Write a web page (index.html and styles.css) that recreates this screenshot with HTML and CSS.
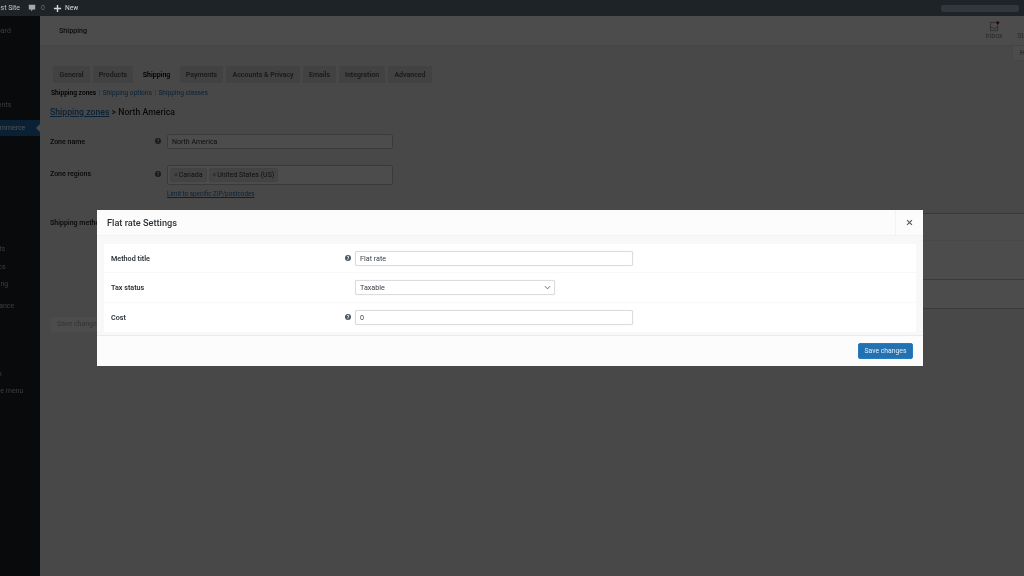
FILE: index.html
```html
<!DOCTYPE html>
<html lang="en">
<head>
<meta charset="utf-8">
<title>Shipping</title>
<link rel="stylesheet" href="styles.css">
</head>
<body>
<div class="page">
  <div class="adminbar">
    <span class="site">Test Site</span>
    <svg class="bar-icon" viewBox="0 0 10 10"><path d="M1 1h8v6H6L4 9.500V7H1z" fill="#a7aaad"/></svg>
    <span class="count">0</span>
    <svg class="bar-plus" viewBox="0 0 10 10"><path d="M4.200 1h1.600v3.200H9v1.600H5.800V9H4.200V5.800H1V4.200h3.200z" fill="#d5d7d9"/></svg>
    <span class="new">New</span>
    <span class="spacer"></span>
    <span class="account"></span>
  </div>
  <div class="shell">
    <nav class="sidebar">
      <ul class="menu">
        <li class="m-dash">Dashboard</li>
        <li class="m-gap">Posts</li>
        <li>Media</li>
        <li>Pages</li>
        <li class="m-comments">Comments</li>
        <li class="m-active">WooCommerce</li>
        <li class="m-products">Products</li>
        <li>Analytics</li>
        <li>Marketing</li>
        <li class="m-appearance">Appearance</li>
        <li>Plugins</li>
        <li class="m-tool">Toolbox</li>
        <li class="m-collapse">Collapse menu</li>
      </ul>
    </nav>
    <main class="main">
      <header class="topbar">
        <h1 class="page-title">Shipping</h1>
        <div class="activity">
          <div class="act-item">
            <svg class="inbox" viewBox="0 0 12 12"><path d="M1.500 1.500h8v9h-8zM1.500 7h2.400l.6 1.300h2.200l.6-1.300h2.200" fill="none" stroke="#8a8a8a" stroke-width=".9"/><circle cx="9.600" cy="1.800" r="1.700" fill="#b5232a"/></svg>
            <span>Inbox</span>
          </div>
          <div class="act-item"><span class="act-blank"></span><span>Stock</span></div>
        </div>
      </header>
      <div class="help-row"><span class="help-tab">Help</span></div>
      <div class="content">
        <div class="tabs">
          <span class="tab t-general">General</span>
          <span class="tab t-products">Products</span>
          <span class="tab tab-on t-shipping">Shipping</span>
          <span class="tab t-payments">Payments</span>
          <span class="tab t-accounts">Accounts &amp; Privacy</span>
          <span class="tab t-emails">Emails</span>
          <span class="tab t-integration">Integration</span>
          <span class="tab t-advanced">Advanced</span>
        </div>
        <div class="subnav">
          <b>Shipping zones</b><i>|</i><a>Shipping options</a><i>|</i><a>Shipping classes</a>
        </div>
        <h2 class="crumb"><a>Shipping zones</a> &gt; North America</h2>
        <div class="field f-name">
          <label>Zone name</label><span class="q">?</span>
          <div class="bg-input">North America</div>
        </div>
        <div class="field f-regions">
          <label>Zone regions</label><span class="q">?</span>
          <div class="bg-select">
            <span class="chip"><em>×</em>Canada</span>
            <span class="chip"><em>×</em>United States (US)</span>
          </div>
        </div>
        <a class="limit">Limit to specific ZIP/postcodes</a>
        <div class="methods">
          <label>Shipping methods</label>
          <div class="method-table">
            <div class="mt-head"></div>
            <div class="mt-body"></div>
            <div class="mt-foot"></div>
          </div>
        </div>
        <span class="bg-save">Save changes</span>
      </div>
    </main>
    <div class="overlay"></div>
    <section class="modal">
      <header class="modal-head">
        <h3>Flat rate Settings</h3>
        <span class="close"><svg viewBox="0 0 8 8"><path d="M1.200 1.200l5.600 5.600M6.800 1.200L1.200 6.800" stroke="#50575e" stroke-width="1.300"/></svg></span>
      </header>
      <div class="modal-body">
        <div class="form">
          <div class="row">
            <label>Method title</label><span class="help">?</span>
            <input class="ctl" type="text" value="Flat rate">
          </div>
          <div class="row">
            <label>Tax status</label><span class="help help-none"></span>
            <div class="ctl ctl-select">Taxable
              <svg viewBox="0 0 8 5"><path d="M1 1l3 3 3-3" fill="none" stroke="#50575e" stroke-width="1"/></svg>
            </div>
          </div>
          <div class="row">
            <label>Cost</label><span class="help">?</span>
            <input class="ctl" type="text" value="0">
          </div>
        </div>
      </div>
      <footer class="modal-foot"><button class="save" type="button">Save changes</button></footer>
    </section>
  </div>
</div>
</body>
</html>
```
FILE: styles.css
```css
* { box-sizing: border-box; }
html, body { margin: 0; padding: 0; height: 100%; overflow: hidden; background: #484848; }
body { font-family: Roboto, "Liberation Sans", sans-serif; font-size: 7px; color: #1d2327; }
.page { width: 1024px; height: 576px; display: flex; flex-direction: column; overflow: hidden; filter: blur(.5px); }
a { color: #2271b1; }

.adminbar { height: 16px; flex: none; background: #1d2327; color: #c3c4c7; display: flex; align-items: center; font-size: 7px; position: relative; z-index: 3; margin-left: -7px; }
.site { color: #c3c4c7; }
.bar-icon { width: 8px; height: 8px; margin-left: 8px; }
.count { margin-left: 5px; color: #6b7075; }
.bar-plus { width: 9px; height: 9px; margin-left: 8px; }
.new { margin-left: 3px; color: #d5d7d9; font-size: 6.700px; }
.spacer { flex: 1; }
.account { width: 78px; height: 7px; background: #30383d; margin-right: 5px; border-radius: 2px; }

.shell { flex: 1; display: flex; position: relative; min-height: 0; }
.sidebar { width: 40px; flex: none; background: #1d2327; overflow: hidden; }
.menu { list-style: none; margin: 0 0 0 -23px; padding: 7px 0 0; color: #c3c4c7; width: 63px; font-size: 7px; }
.menu li { height: 17.500px; line-height: 17.500px; white-space: nowrap; }
.menu .m-gap { margin-top: 3px; }
.menu .m-comments { margin-top: .5px; }
.menu .m-active { background: #2271b1; color: #fff; margin: 5.500px 0 0 0; height: 16.500px; line-height: 16.500px; position: relative; }
.m-active::after { content: ""; position: absolute; right: 0; top: 4px; border: 4.500px solid transparent; border-right-color: #f0f0f1; }
.menu .m-products { margin-top: 105px; }
.menu .m-appearance { margin-top: 4.500px; }
.menu .m-tool { margin-top: 32.500px; }

.main { flex: 1; min-width: 0; background: #f0f0f1; display: flex; flex-direction: column; }
.topbar { height: 30px; flex: none; background: #fff; display: flex; align-items: center; padding-left: 19px; border-bottom: 1px solid #e6e6e6; }
.page-title { margin: 0; font-size: 7.200px; font-weight: 500; flex: 1; }
.activity { display: flex; gap: 16px; margin-right: -10px; }
.act-item { display: flex; flex-direction: column; align-items: center; font-size: 7px; color: #8a8a8a; width: 16px; line-height: 8px; }
.act-blank { height: 11px; }
.inbox { width: 11px; height: 11px; }
.help-row { height: 14px; flex: none; display: flex; justify-content: flex-end; }
.help-tab { width: 11px; height: 14px; background: #fff; padding: 3px 0 0 7px; white-space: nowrap; overflow: hidden; font-size: 7px; color: #50575e; box-shadow: 0 0 1px #c3c4c7; }

.content { padding: 6px 0 0 10px; flex: 1; }
.tabs { display: flex; margin-left: 3px; height: 17px; }
.tab { height: 17px; background: #dcdcde; display: flex; align-items: center; justify-content: center; font-weight: 600; color: #50575e; margin-right: 3px; font-size: 7px; }
.tab-on { background: #f0f0f1; color: #000; }
.t-general { width: 37px; }
.t-products { width: 40px; }
.t-shipping { width: 41px; }
.t-payments { width: 43px; }
.t-accounts { width: 74px; }
.t-emails { width: 33px; }
.t-integration { width: 46px; }
.t-advanced { width: 44px; }

.subnav { margin: 6px 0 0 1px; height: 9px; line-height: 9px; font-size: 6.600px; display: flex; gap: 2.500px; }
.subnav b { font-weight: 600; color: #000; }
.subnav i { color: #787c82; font-style: normal; font-weight: 300; }
.crumb { margin: 9px 0 0; font-size: 8.700px; font-weight: 500; height: 11px; line-height: 11px; color: #1d2327; }
.crumb a { text-decoration: underline; }

.field { display: flex; }
.field label { width: 105px; font-weight: 600; font-size: 7px; }
.q { width: 6px; height: 6px; border-radius: 50%; background: #50575e; color: #fff; font-size: 5px; line-height: 6px; text-align: center; margin-right: 6px; font-weight: 700; flex: none; }
.f-name { margin-top: 16px; align-items: center; height: 15px; }
.f-name .q { position: relative; top: -.5px; }
.bg-input { width: 226px; height: 15px; background: #fff; border: 1px solid #c3c4c7; border-radius: 2px; padding-left: 4px; line-height: 14px; color: #2c3338; font-size: 7px; }
.f-regions { margin-top: 16px; height: 20px; }
.f-regions label { line-height: 19px; }
.f-regions .q { margin-top: 6px; }
.bg-select { width: 226px; height: 20px; background: #fff; border: 1px solid #c3c4c7; border-radius: 2px; padding: 2px; display: flex; gap: 2px; }
.chip { height: 14px; background: #e4e4e4; border: 1px solid #dcdcde; border-radius: 2px; padding: 0 3px; line-height: 12px; color: #2c3338; }
.chip em { font-style: normal; color: #787c82; margin-right: 1px; }
.limit { display: block; margin: 5px 0 0 117px; height: 9px; line-height: 9px; font-size: 6.300px; text-decoration: underline; }

.methods { display: flex; margin-top: 20px; }
.methods label { width: 117px; font-weight: 600; flex: none; white-space: nowrap; }
.method-table { flex: 1; border: 1px solid #c3c4c7; border-right: 0; background: #fff; height: 96px; margin-top: -6px; }
.mt-head { height: 27px; border-bottom: 1px solid #f0f0f0; }
.mt-body { height: 39px; border-bottom: 1px solid #c3c4c7; }
.mt-foot { height: 28px; background: #fff; }
.bg-save { display: block; width: 49px; height: 15px; margin: 8px 0 0 1px; background: #fff; border-radius: 2px; color: #b5b8b7; line-height: 15px; padding-left: 6px; white-space: nowrap; font-weight: 500; }

.overlay { position: absolute; inset: 0; background: rgba(0, 0, 0, .7); z-index: 1; }

.modal { position: absolute; left: 97px; top: 194px; width: 826px; height: 156px; z-index: 2; background: #fcfcfc; display: flex; flex-direction: column; }
.modal-head { height: 26px; flex: none; display: flex; align-items: center; justify-content: space-between; border-bottom: 1px solid #f2f2f2; padding-left: 10px; }
.modal-head h3 { margin: 0; font-size: 9.200px; font-weight: 500; color: #2c3338; }
.close { width: 28px; height: 26px; border-left: 1px solid #f2f2f2; display: flex; align-items: center; justify-content: center; }
.close svg { width: 7px; height: 7px; }
.modal-body { height: 100px; flex: none; background: #f8f8f8; padding: 8px 7px 3px; border-bottom: 1px solid #ebebeb; }
.form { background: #fff; height: 88px; display: flex; flex-direction: column; }
.row { height: 29.330px; display: flex; align-items: center; padding-left: 7px; border-bottom: 1px solid #f8f8f8; }
.row:last-child { border-bottom: 0; }
.row label { width: 234px; font-weight: 600; color: #2c3338; font-size: 7.200px; flex: none; }
.help { width: 6px; height: 6px; border-radius: 50%; background: #50575e; color: #fff; font-size: 5px; line-height: 6px; text-align: center; font-weight: 700; margin-right: 4px; flex: none; }
.help-none { visibility: hidden; }
.ctl { width: 278px; height: 15px; border: 1px solid #dcdcde; border-radius: 2px; background: #fff; padding: 0 4px; font: 7.200px Roboto, "Liberation Sans", sans-serif; color: #3c434a; box-shadow: 0 0 1px #d0d0d0; outline: 0; }
.ctl-select { width: 200px; display: flex; align-items: center; justify-content: space-between; padding-right: 3px; }
.ctl-select svg { width: 7px; height: 5px; }
.modal-foot { flex: 1; display: flex; align-items: center; justify-content: flex-end; padding-right: 10px; }
.save { width: 55px; height: 16px; background: #2271b1; border: 1px solid #2a7cc0; border-radius: 2px; color: #e4edf5; font: 400 6.800px Roboto, "Liberation Sans", sans-serif; padding: 0; }
```
